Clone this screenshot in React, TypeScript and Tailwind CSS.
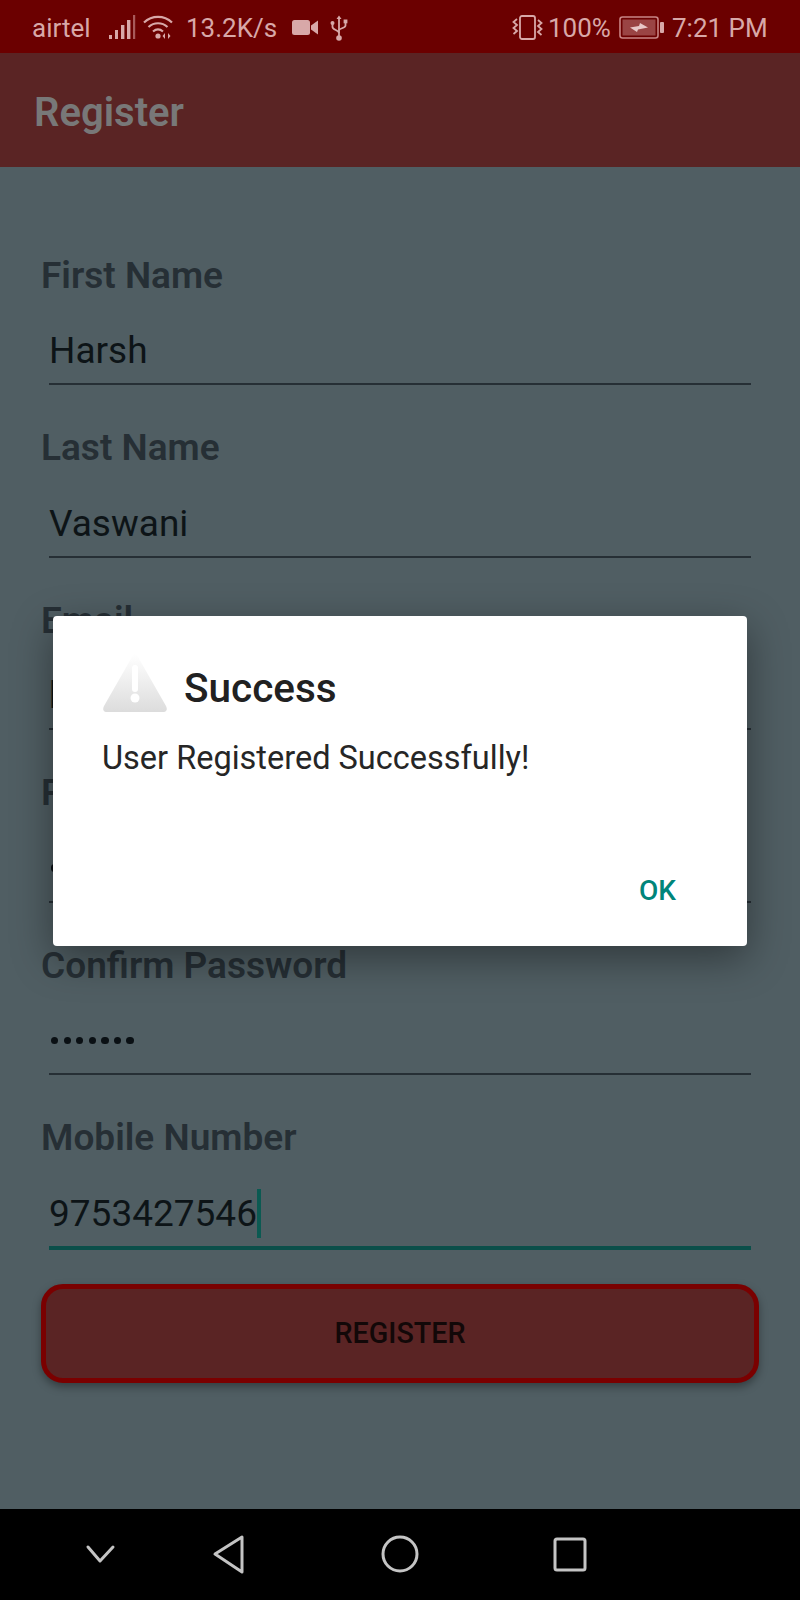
import React from "react";

const roboto = "font-['Roboto',sans-serif]";

function Field({ label, value, dots, caret }: { label: string; value?: string; dots?: boolean; caret?: boolean }) {
  return (
    <div className="h-[172.5px] flex flex-col">
      <div className="h-[48px] flex items-center text-[37px] leading-none font-semibold text-[#262f35] pl-[41px]">{label}</div>
      <div className="ml-[49px] mr-[49px] h-[65px] mt-[19px] flex items-center relative">
        {dots ? (
          <div className="flex gap-[5.4px] pl-[2px]">
            {[0, 1, 2, 3, 4, 5, 6].map((i) => (
              <span key={i} className="w-[7.2px] h-[7.2px] rounded-full bg-[#0a1014]" />
            ))}
          </div>
        ) : (
          <span className="text-[37px] leading-none text-[#0d1417]">{value}</span>
        )}
        {caret && <span className="w-[4px] h-[49px] bg-[#0b5a52]" />}
      </div>
      <div className={`ml-[49px] mr-[49px] ${caret ? "h-[4px] bg-[#0b4f4a]" : "h-[2px] bg-[#262f35]"}`} />
    </div>
  );
}

function StatusIcons() {
  return (
    <>
      <svg width="27" height="25" viewBox="0 0 27 25" className="ml-[19px]">
        <g fill="#d8a8a8">
          <rect x="0" y="20" width="3" height="4" />
          <rect x="6" y="15" width="3" height="9" />
          <rect x="12" y="10" width="3.4" height="14" />
          <rect x="18" y="5" width="3.4" height="19" />
        </g>
        <rect x="24" y="0" width="2.2" height="24" fill="#a85a5a" />
      </svg>
      <svg width="30" height="25" viewBox="0 0 30 25" className="ml-[7px]" fill="none" stroke="#d8a8a8" strokeWidth="2.2">
        <path d="M1 7.5 C9 0 21 0 29 7.5" />
        <path d="M5.5 12 C11 7 19 7 24.5 12" />
        <path d="M10 16.5 C13 14 17 14 20 16.5" />
        <circle cx="15" cy="21" r="2.6" fill="#d8a8a8" stroke="none" />
        <path d="M22 18 L19.5 21 L22 24 Z M25 18 L27.5 21 L25 24 Z" fill="#d8a8a8" stroke="none" />
      </svg>
      <span className="ml-[13px] w-[92px] whitespace-nowrap">13.2K/s</span>
      <svg width="26" height="15" viewBox="0 0 26 15" className="ml-[14px]">
        <rect x="0" y="0" width="18" height="15" rx="2.5" fill="#d8a8a8" />
        <path d="M19 5.5 L26 0.5 V14.5 L19 9.5 Z" fill="#d8a8a8" />
      </svg>
      <svg width="18" height="26" viewBox="0 0 18 26" className="ml-[12px]" fill="none" stroke="#d8a8a8" strokeWidth="1.8">
        <path d="M9 3 V22" />
        <path d="M6.5 4 L9 0.5 L11.5 4 Z" fill="#d8a8a8" stroke="none" />
        <path d="M2.5 9 V12 C2.5 15 9 15 9 18" />
        <path d="M15.5 7 V10.5 C15.5 13.5 9 13 9 15.5" />
        <circle cx="2.5" cy="8" r="2" fill="#d8a8a8" stroke="none" />
        <rect x="13.6" y="4.5" width="3.8" height="3.8" fill="#d8a8a8" stroke="none" />
        <circle cx="9" cy="23" r="2.8" fill="#d8a8a8" stroke="none" />
      </svg>
    </>
  );
}

function RightIcons() {
  return (
    <>
      <svg width="31" height="25" viewBox="0 0 31 25" fill="none" stroke="#d8a8a8" strokeWidth="1.8">
        <rect x="8" y="1" width="15" height="23" rx="2" />
        <path d="M5 4 L1.5 7 L5 10 L1.5 13 L5 16 L1.5 19" />
        <path d="M26 5 L29.5 8 L26 11 L29.5 14 L26 17 L29.5 20" />
      </svg>
      <span className="ml-[5px] w-[64px]">100%</span>
      <svg width="45" height="23" viewBox="0 0 45 23" className="ml-[7px]">
        <rect x="1" y="1" width="38" height="21" rx="2.5" fill="none" stroke="#c98585" strokeWidth="1.6" />
        <rect x="3.5" y="3.5" width="33" height="16" fill="#9a4444" />
        <rect x="41" y="6" width="4" height="11" rx="1" fill="#d8a8a8" />
        <path d="M11 11.5 L20 10 L21 7 L29 11.5 L19 13.5 L18 16 Z" fill="#e8c8c8" />
      </svg>
      <span className="ml-[8px] w-[97px] whitespace-nowrap">7:21 PM</span>
    </>
  );
}

export default function App() {
  return (
    <div className={`${roboto} relative w-[800px] h-[1600px] flex flex-col bg-[#505e63] overflow-hidden`}>
      <div className="h-[53px] bg-[#6b0000] flex items-center justify-between pl-[32px] pr-[31px] pt-[2px] text-[26px] leading-none text-[#d8a8a8] shrink-0">
        <div className="flex items-center">
          <span className="w-[58px]">airtel</span>
          <StatusIcons />
        </div>
        <div className="flex items-center">
          <RightIcons />
        </div>
      </div>
      <div className="h-[114px] bg-[#5a2424] flex items-center pl-[34px] pt-[6px] text-[40px] leading-none font-semibold text-[#787878] shrink-0">
        Register
      </div>
      <div className="flex-1 flex flex-col pt-[84px]">
        <Field label="First Name" value="Harsh" />
        <Field label="Last Name" value="Vaswani" />
        <Field label="Email" value="harsh@gmail.com" />
        <Field label="Password" dots />
        <Field label="Confirm Password" dots />
        <Field label="Mobile Number" value="9753427546" caret />
        <div className="mx-[41px] mt-[-2px] h-[99px] rounded-[22px] border-[5px] border-[#7a0000] bg-[#5a2424] shadow-[0_4px_8px_rgba(0,0,0,0.35)] flex items-center justify-center text-[28.7px] font-medium text-[#120808]">
          REGISTER
        </div>
      </div>
      <div className="h-[91px] bg-black flex items-center shrink-0 relative">
        <svg width="800" height="91" viewBox="0 0 800 91" fill="none" stroke="#c4c4c4" strokeWidth="3" strokeLinejoin="round" strokeLinecap="round">
          <path d="M88 38 L100 52 L113 38" />
          <path d="M242 28 L242 63 L215 45 Z" />
          <circle cx="400" cy="45" r="17" />
          <rect x="555" y="30" width="30" height="31" rx="2" />
        </svg>
      </div>

      <div className="absolute left-[53px] top-[616px] w-[694px] h-[330px] bg-white rounded-[4px] shadow-[0_12px_40px_rgba(0,0,0,0.4)] flex flex-col">
        <div className="flex items-start pl-[49px] pt-[37px]">
          <svg width="66" height="60" viewBox="0 0 66 60">
            <defs>
              <linearGradient id="w" x1="0" y1="0" x2="0" y2="1">
                <stop offset="0" stopColor="#ffffff" />
                <stop offset="1" stopColor="#dcdcdc" />
              </linearGradient>
            </defs>
            <path d="M33 1 C34 1 35 2 36 4 L64 53 C66 57 64 59 61 59 L5 59 C2 59 0 57 2 53 L30 4 C31 2 32 1 33 1 Z" fill="url(#w)" />
            <path d="M33 15 L33 36" stroke="#ffffff" strokeWidth="6" strokeLinecap="round" />
            <circle cx="33" cy="45" r="4.5" fill="#ffffff" />
          </svg>
          <span className="ml-[16px] mt-[15px] text-[40.5px] leading-none font-medium text-[#212121]">Success</span>
        </div>
        <div className="pl-[49px] mt-[29px] text-[32.5px] leading-none text-[#262626]">User Registered Successfully!</div>
        <div className="mt-auto flex justify-end pr-[71px] pb-[41px] text-[28px] leading-none font-medium text-[#00857a]">OK</div>
      </div>
    </div>
  );
}
